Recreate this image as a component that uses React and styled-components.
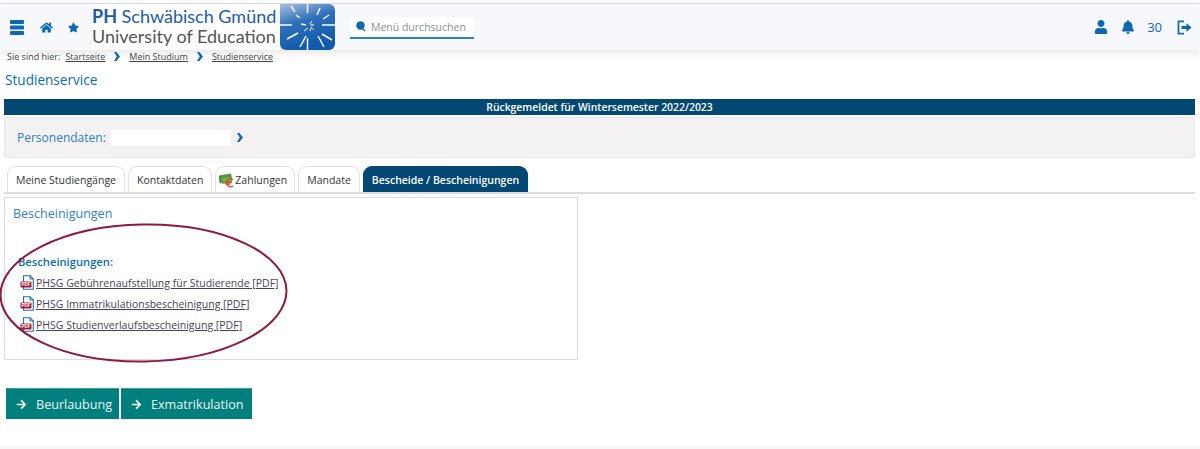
import React from "react";
import styled, { createGlobalStyle } from "styled-components";
import { FaHome, FaStar, FaUser, FaBell, FaArrowRight } from "react-icons/fa";

const GlobalStyle = createGlobalStyle`
  html, body {
    margin: 0;
    padding: 0;
    background: #fff;
    font-family: "Open Sans", "Noto Sans", sans-serif;
    color: #333;
    overflow: hidden;
  }
`;

const Page = styled.div`
  position: relative;
  width: 1200px;
  height: 449px;
  overflow: hidden;
  padding-top: 3px;
  box-sizing: border-box;
`;

const Header = styled.header`
  display: flex;
  align-items: center;
  height: 47px;
  border-top: 1px solid #d9dadc;
  box-sizing: border-box;
  background: #f6f8fb;
  box-shadow: 0 3px 8px rgba(0, 0, 0, 0.1);
  padding-left: 10px;
  color: #0b68b1;
`;

const IconSlot = styled.span`
  display: flex;
  align-items: center;
  margin-left: ${(p) => p.$gap || 0}px;
  font-size: ${(p) => p.$size || 14}px;
`;

const Logo = styled.div`
  display: flex;
  align-items: center;
  height: 46px;
  margin-left: 13px;
  background: #fff;
`;

const LogoText = styled.div`
  display: flex;
  flex-direction: column;
  width: 188px;
  font-family: "Lato", "Open Sans", sans-serif;
  font-size: 18px;
  line-height: 20px;
  white-space: nowrap;
  margin-top: -3px;
`;

const LogoTop = styled.span`
  color: #1d5ba8;
  strong {
    font-weight: 700;
  }
`;

const LogoBottom = styled.span`
  color: #555;
`;

const Search = styled.div`
  display: flex;
  align-items: center;
  gap: 5px;
  width: 124px;
  height: 22px;
  margin-left: 15px;
  margin-top: 1px;
  padding-left: 6px;
  box-sizing: border-box;
  background: #fff;
  border-bottom: 2px solid #2a82c6;
  color: #8a8f94;
  font-size: 10.5px;
`;

const HeaderRight = styled.div`
  display: flex;
  align-items: center;
  margin-left: auto;
  margin-right: 8px;
`;

const Count = styled.span`
  margin-left: 12px;
  font-size: 13px;
  font-weight: 500;
`;

const Breadcrumb = styled.nav`
  display: flex;
  align-items: center;
  height: 14px;
  margin-top: -1px;
  padding-left: 7px;
  font-size: 9px;
  color: #444;
`;

const Crumb = styled.span`
  text-decoration: underline;
  margin-left: ${(p) => p.$gap || 0}px;
`;

const CrumbArrow = styled.span`
  display: flex;
  margin: 0 9px;
`;

const Title = styled.h1`
  margin: 7px 0 0 5px;
  height: 29px;
  font-size: 13.6px;
  line-height: 20px;
  font-weight: 400;
  color: #0b6cb5;
`;

const Banner = styled.div`
  margin: 0 5px 0 4px;
  height: 16px;
  background: #034872;
  color: #fff;
  font-size: 10.4px;
  font-weight: 600;
  line-height: 17px;
  text-align: center;
`;

const PersonPanel = styled.div`
  display: flex;
  align-items: center;
  height: 41px;
  margin: 2px 5px 0 4px;
  padding-left: 12px;
  background: #f3f1f1;
  border: 1px solid #e6eaee;
  border-radius: 2px;
  box-sizing: border-box;
  color: #2f7fc1;
  font-size: 12px;
`;

const PersonValue = styled.span`
  width: 121px;
  height: 16px;
  margin-left: 4px;
  background: #fff;
`;

const PanelArrow = styled.span`
  display: flex;
  margin-left: 6px;
`;

const Tabs = styled.div`
  display: flex;
  align-items: flex-end;
  gap: 3px;
  height: 29px;
  margin: 7px 5px 0 4px;
  padding-left: 3px;
  border-bottom: 2px solid #dedede;
  box-sizing: border-box;
`;

const Tab = styled.div`
  display: flex;
  align-items: center;
  height: 26px;
  padding: 1px ${(p) => p.$right || 8}px 0 ${(p) => p.$left || 8}px;
  box-sizing: border-box;
  border: 1px solid ${(p) => (p.$active ? "#034872" : "#e2e2e2")};
  border-bottom: 0;
  border-radius: 9px 9px 0 0;
  background: ${(p) => (p.$active ? "#034872" : "#fff")};
  color: ${(p) => (p.$active ? "#fff" : "#333")};
  font-size: 10.5px;
  font-weight: ${(p) => (p.$active ? 600 : 400)};
  white-space: nowrap;
`;

const Card = styled.section`
  width: 574px;
  height: 163px;
  margin: 3px 0 0 4px;
  padding: 8px 8px 0;
  border: 1px solid #dcdcdc;
  box-sizing: border-box;
`;

const CardTitle = styled.h2`
  margin: 0;
  font-size: 12.5px;
  line-height: 16px;
  font-weight: 400;
  color: #2f7fc1;
`;

const ListTitle = styled.div`
  margin: 32px 0 0 5px;
  font-size: 11.2px;
  line-height: 16px;
  font-weight: 600;
  color: #0b6cb5;
`;

const FileList = styled.ul`
  list-style: none;
  margin: 2px 0 0 7px;
  padding: 0;
`;

const FileRow = styled.li`
  display: flex;
  align-items: center;
  height: 21px;
  font-size: 10.5px;
  color: #444;
  a {
    color: #445;
    margin-left: 1px;
    text-decoration: underline;
  }
`;

const Actions = styled.div`
  display: flex;
  gap: 2px;
  margin: 28px 0 0 6px;
`;

const ActionButton = styled.button`
  display: flex;
  align-items: center;
  gap: 9px;
  height: 31px;
  padding: 0 ${(p) => p.$right || 7}px 0 10px;
  border: 0;
  border-top: 1px solid #3a9d9a;
  background: #007f7c;
  color: #e6f7f6;
  font-family: inherit;
  font-size: 12.6px;
  svg {
    font-size: 11px;
    color: #fff;
  }
`;

const BottomFade = styled.div`
  position: absolute;
  left: 0;
  right: 0;
  bottom: 0;
  height: 4px;
  background: linear-gradient(#fff, #f4f4f4);
`;

const Highlight = styled.svg`
  position: absolute;
  left: 0;
  top: 220px;
  pointer-events: none;
`;

const Burger = () => (
  <svg width="14" height="15" viewBox="0 0 14 15" fill="currentColor">
    <rect y="0" width="14" height="4" rx="1" />
    <rect y="5.5" width="14" height="4" rx="1" />
    <rect y="11" width="14" height="4" rx="1" />
  </svg>
);

const SearchGlyph = () => (
  <svg width="10" height="11" viewBox="0 0 10 11" fill="#0b68b1">
    <circle cx="4.5" cy="4.5" r="4.2" />
    <path d="M6 8l2.6 2.4L9.6 9.4 7.2 7z" />
  </svg>
);

const Chevron = () => (
  <svg width="6" height="9" viewBox="0 0 6 9" fill="#0b68b1">
    <path d="M0 0h2.4L6 4.5 2.4 9H0l2.8-4.5z" />
  </svg>
);

const Exit = () => (
  <svg width="15" height="15" viewBox="0 0 15 15" fill="none" stroke="currentColor" strokeWidth="1.7">
    <path d="M7 1.3H1.5v12.4H7" />
    <path d="M4.5 7.5H10" strokeWidth="3" />
    <path d="M9.5 3.2L14.5 7.5 9.5 11.8z" fill="currentColor" stroke="none" />
  </svg>
);

// star burst of the university logo
const BURST = [
  [0, 21, 12, 21], [42, 21, 55, 21], [27.5, 0, 27.5, 9], [27.5, 34, 27.5, 46],
  [16, 11, 20, 14], [40, 4, 37, 11], [49, 11, 43, 15], [7, 35, 18, 29], [11, 2, 15, 8],
  [20, 43, 26, 32], [44, 43, 38, 32], [52, 36, 42, 30], [21, 20, 26, 21], [30, 21, 34, 21],
  [24, 27, 28, 24], [30, 27, 31, 24], [34, 26, 31, 23], [32, 17, 30, 20],
];

const LogoMark = () => (
  <svg width="55" height="46" viewBox="0 0 55 46" style={{ display: "block" }}>
    <defs>
      <linearGradient id="markFill" x1="0" y1="0" x2="0.35" y2="1">
        <stop offset="0" stopColor="#a9bfe0" />
        <stop offset="0.45" stopColor="#2f6fb9" />
        <stop offset="1" stopColor="#0f5cab" />
      </linearGradient>
    </defs>
    <path d="M0 0H49a6 6 0 0 1 6 6V40a6 6 0 0 1-6 6H6a6 6 0 0 1-6-6z" fill="url(#markFill)" />
    {BURST.map(([a, b, c, d], i) => (
      <line key={i} x1={a} y1={b} x2={c} y2={d} stroke="#fff" strokeWidth={i > 12 ? 1 : 1.5} />
    ))}
  </svg>
);

const PdfIcon = () => (
  <svg width="15" height="15" viewBox="0 0 15 15">
    <path d="M3.5.7H10l3.3 3.3v10.3H3.5z" fill="#fff" stroke="#1d6fb8" strokeWidth="1.1" />
    <path d="M10 .7V4h3.3" fill="none" stroke="#1d6fb8" strokeWidth="1" />
    <rect x="0.5" y="6.5" width="11" height="6" rx="1" fill="#a3192f" />
    <text x="6" y="11.3" fontSize="4.6" fontWeight="700" fill="#fff" textAnchor="middle" fontFamily="Liberation Sans, sans-serif">PDF</text>
  </svg>
);

const MoneyIcon = () => (
  <svg width="16" height="15" viewBox="0 0 16 15">
    <rect x="0.5" y="2" width="12" height="7" transform="rotate(-10 6 6)" fill="#4d9a3f" stroke="#2c6f2a" strokeWidth="0.6" />
    <rect x="3" y="4.5" width="10" height="6" transform="rotate(-6 8 8)" fill="#6bb04e" />
    <path d="M14 6.5a4 4 0 1 0 0 6.5M6.5 9h5M6.5 11h5" fill="none" stroke="#e2451f" strokeWidth="1.3" />
  </svg>
);

const FILES = [
  "PHSG Gebührenaufstellung für Studierende [PDF]",
  "PHSG Immatrikulationsbescheinigung [PDF]",
  "PHSG Studienverlaufsbescheinigung [PDF]",
];

export default function App() {
  return (
    <Page>
      <GlobalStyle />
      <Header>
        <IconSlot><Burger /></IconSlot>
        <IconSlot $gap={16} $size={13}><FaHome /></IconSlot>
        <IconSlot $gap={15} $size={11}><FaStar /></IconSlot>
        <Logo>
          <LogoText>
            <LogoTop><strong>PH</strong> Schwäbisch Gmünd</LogoTop>
            <LogoBottom>University of Education</LogoBottom>
          </LogoText>
          <LogoMark />
        </Logo>
        <Search>
          <SearchGlyph />
          Menü durchsuchen
        </Search>
        <HeaderRight>
          <IconSlot $size={14}><FaUser /></IconSlot>
          <IconSlot $gap={13} $size={14}><FaBell /></IconSlot>
          <Count>30</Count>
          <IconSlot $gap={15}><Exit /></IconSlot>
        </HeaderRight>
      </Header>

      <Breadcrumb>
        Sie sind hier:
        <Crumb $gap={5}>Startseite</Crumb>
        <CrumbArrow><Chevron /></CrumbArrow>
        <Crumb>Mein Studium</Crumb>
        <CrumbArrow><Chevron /></CrumbArrow>
        <Crumb>Studienservice</Crumb>
      </Breadcrumb>

      <Title>Studienservice</Title>
      <Banner>Rückgemeldet für Wintersemester 2022/2023</Banner>
      <PersonPanel>
        Personendaten:
        <PersonValue />
        <PanelArrow><Chevron /></PanelArrow>
      </PersonPanel>

      <Tabs>
        <Tab>Meine Studiengänge</Tab>
        <Tab>Kontaktdaten</Tab>
        <Tab $left={3} $right={7}><MoneyIcon />Zahlungen</Tab>
        <Tab>Mandate</Tab>
        <Tab $active>Bescheide / Bescheinigungen</Tab>
      </Tabs>

      <Card>
        <CardTitle>Bescheinigungen</CardTitle>
        <ListTitle>Bescheinigungen:</ListTitle>
        <FileList>
          {FILES.map((name) => (
            <FileRow key={name}>
              <PdfIcon />
              <a href="#">{name}</a>
            </FileRow>
          ))}
        </FileList>
      </Card>

      <Actions>
        <ActionButton $right={7}><FaArrowRight />Beurlaubung</ActionButton>
        <ActionButton $right={8}><FaArrowRight />Exmatrikulation</ActionButton>
      </Actions>

      <BottomFade />
      <Highlight width="300" height="150" viewBox="0 0 300 150">
        <ellipse cx="143.5" cy="73" rx="143" ry="68.5" fill="none" stroke="#8e1a3d" strokeWidth="2" transform="rotate(-1 143 73)" />
      </Highlight>
    </Page>
  );
}
